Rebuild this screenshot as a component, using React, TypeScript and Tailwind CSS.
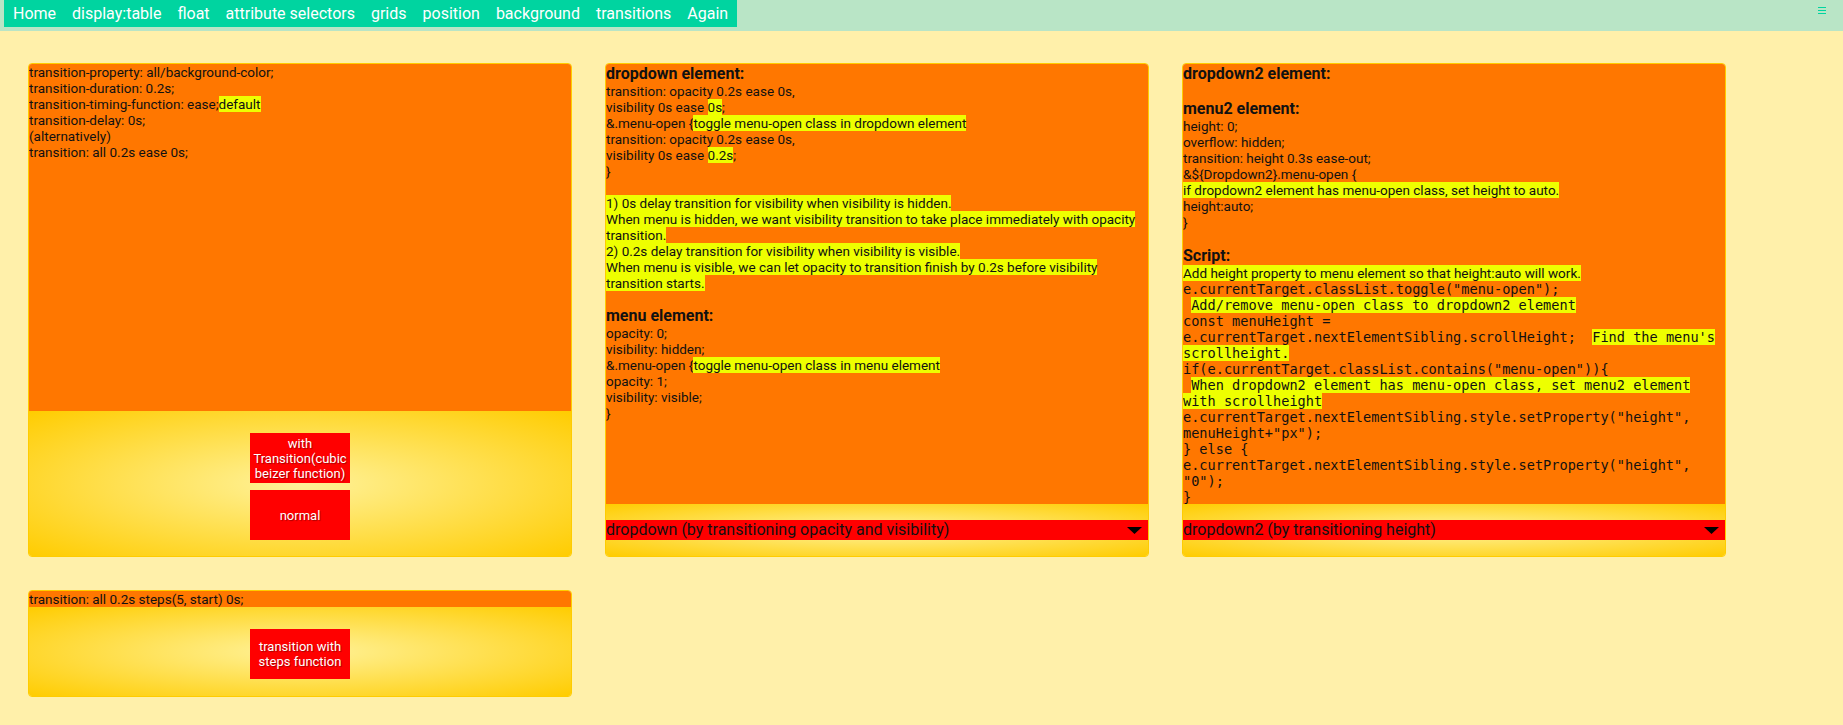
import React from "react";

const navItems = [
  "Home",
  "display:table",
  "float",
  "attribute selectors",
  "grids",
  "position",
  "background",
  "transitions",
  "Again",
];

const Hl = ({ children }: { children: React.ReactNode }) => (
  <span className="bg-[#eeff00]">{children}</span>
);

const Line = ({ children }: { children?: React.ReactNode }) => (
  <div className="h-4 whitespace-pre">{children}</div>
);

const Heading = ({ children, className = "" }: { children: React.ReactNode; className?: string }) => (
  <div className={`h-[19px] text-[16px] font-bold leading-[19px] ${className}`}>{children}</div>
);

const Mono = ({ children }: { children?: React.ReactNode }) => (
  <div className="h-4 whitespace-pre font-['DejaVu_Sans_Mono',monospace] text-[13.6px] leading-4">{children}</div>
);

const RedButton = ({ children }: { children: React.ReactNode }) => (
  <div className="flex h-[50px] w-[100px] items-center justify-center bg-[#ff0000] text-center text-[13px] leading-[15px] text-white [text-shadow:1px_1px_1px_rgba(0,0,0,0.35)]">
    {children}
  </div>
);

const Dropdown = ({ label }: { label: string }) => (
  <div className="flex h-[52px] flex-col justify-center bg-[radial-gradient(ellipse_at_center,#fff29a_0%,#ffcc00_100%)]">
    <div className="flex h-5 items-center justify-between bg-[#ff0000] pr-[6px] text-[16px] leading-5 text-[#111]">
      <span>{label}</span>
      <svg width="15" height="7" viewBox="0 0 15 7">
        <polygon points="0,0 15,0 7.5,7" fill="#000" />
      </svg>
    </div>
  </div>
);

const Card = ({ children, className = "" }: { children: React.ReactNode; className?: string }) => (
  <div className={`flex flex-col overflow-hidden rounded-[4px] border border-[#ffcc00] ${className}`}>
    {children}
  </div>
);

export default function App() {
  return (
    <div className="min-h-screen bg-[#fff0aa] font-['Roboto',sans-serif] text-[13.5px] leading-4 text-[#111]">
      {/* header */}
      <div className="flex h-[31px] items-start justify-between bg-[#b9e5c6]">
        <nav className="ml-1 flex h-[27px] items-center bg-[#00d4a0] px-px">
          {navItems.map((item) => (
            <span key={item} className="px-2 text-[16px] leading-5 whitespace-nowrap text-white">
              {item}
            </span>
          ))}
        </nav>
        <div className="mr-[17px] mt-[7px] flex w-2 flex-col gap-[2px]">
          <div className="h-px bg-[#00d4a0]" />
          <div className="h-px bg-[#00d4a0]" />
          <div className="h-px bg-[#00d4a0]" />
        </div>
      </div>

      <div className="grid grid-cols-[repeat(3,544px)] gap-[33px] pl-[28px] pt-[32px]">
        {/* card 1 */}
        <Card className="h-[494px]">
          <div className="h-[347px] bg-[#ff7700]">
            <Line>transition-property: all/background-color;</Line>
            <Line>transition-duration: 0.2s;</Line>
            <Line>
              transition-timing-function: ease;<Hl>default</Hl>
            </Line>
            <Line>transition-delay: 0s;</Line>
            <Line>(alternatively)</Line>
            <Line>transition: all 0.2s ease 0s;</Line>
          </div>
          <div className="flex flex-1 flex-col items-center gap-[7px] bg-[radial-gradient(ellipse_at_center,#fff29a_0%,#ffcc00_100%)] pt-[22px]">
            <RedButton>
              with
              <br />
              Transition(cubic
              <br />
              beizer function)
            </RedButton>
            <RedButton>normal</RedButton>
          </div>
        </Card>

        {/* card 2 */}
        <Card className="h-[494px]">
          <div className="h-[440px] bg-[#ff7700]">
            <Heading>dropdown element:</Heading>
            <Line>transition: opacity 0.2s ease 0s,</Line>
            <Line>
              visibility 0s ease <Hl>0s</Hl>;
            </Line>
            <Line>
              &amp;.menu-open {"{"}
              <Hl>toggle menu-open class in dropdown element</Hl>
            </Line>
            <Line>transition: opacity 0.2s ease 0s,</Line>
            <Line>
              visibility 0s ease <Hl>0.2s</Hl>;
            </Line>
            <Line>{"}"}</Line>
            <Line />
            <Line>
              <Hl>1) 0s delay transition for visibility when visibility is hidden.</Hl>
            </Line>
            <Line>
              <Hl>When menu is hidden, we want visibility transition to take place immediately with opacity</Hl>
            </Line>
            <Line>
              <Hl>transition.</Hl>
            </Line>
            <Line>
              <Hl>2) 0.2s delay transition for visibility when visibility is visible.</Hl>
            </Line>
            <Line>
              <Hl>When menu is visible, we can let opacity to transition finish by 0.2s before visibility</Hl>
            </Line>
            <Line>
              <Hl>transition starts.</Hl>
            </Line>
            <Heading className="mt-[15px]">menu element:</Heading>
            <Line>opacity: 0;</Line>
            <Line>visibility: hidden;</Line>
            <Line>
              &amp;.menu-open {"{"}
              <Hl>toggle menu-open class in menu element</Hl>
            </Line>
            <Line>opacity: 1;</Line>
            <Line>visibility: visible;</Line>
            <Line>{"}"}</Line>
          </div>
          <Dropdown label="dropdown (by transitioning opacity and visibility)" />
        </Card>

        {/* card 3 */}
        <Card className="h-[494px]">
          <div className="h-[440px] bg-[#ff7700]">
            <Heading>dropdown2 element:</Heading>
            <Line />
            <Heading>menu2 element:</Heading>
            <Line>height: 0;</Line>
            <Line>overflow: hidden;</Line>
            <Line>transition: height 0.3s ease-out;</Line>
            <Line>&amp;${"{Dropdown2}"}.menu-open {"{"}</Line>
            <Line>
              <Hl>if dropdown2 element has menu-open class, set height to auto.</Hl>
            </Line>
            <Line>height:auto;</Line>
            <Line>{"}"}</Line>
            <Line />
            <Heading>Script:</Heading>
            <Line>
              <Hl>Add height property to menu element so that height:auto will work.</Hl>
            </Line>
            <Mono>e.currentTarget.classList.toggle("menu-open");</Mono>
            <Mono>
              {" "}
              <Hl>Add/remove menu-open class to dropdown2 element</Hl>
            </Mono>
            <Mono>const menuHeight =</Mono>
            <Mono>
              {"e.currentTarget.nextElementSibling.scrollHeight;  "}
              <Hl>Find the menu's</Hl>
            </Mono>
            <Mono>
              <Hl>scrollheight.</Hl>
            </Mono>
            <Mono>if(e.currentTarget.classList.contains("menu-open")){"{"}</Mono>
            <Mono>
              {" "}
              <Hl>When dropdown2 element has menu-open class, set menu2 element</Hl>
            </Mono>
            <Mono>
              <Hl>with scrollheight</Hl>
            </Mono>
            <Mono>e.currentTarget.nextElementSibling.style.setProperty("height",</Mono>
            <Mono>menuHeight+"px");</Mono>
            <Mono>{"} else {"}</Mono>
            <Mono>e.currentTarget.nextElementSibling.style.setProperty("height",</Mono>
            <Mono>"0");</Mono>
            <Mono>{"}"}</Mono>
          </div>
          <Dropdown label="dropdown2 (by transitioning height)" />
        </Card>

        {/* card 4 */}
        <Card className="h-[107px]">
          <div className="h-4 bg-[#ff7700]">
            <Line>transition: all 0.2s steps(5, start) 0s;</Line>
          </div>
          <div className="flex flex-1 flex-col items-center bg-[radial-gradient(ellipse_at_center,#fff29a_0%,#ffcc00_100%)] pt-[22px]">
            <RedButton>
              transition with
              <br />
              steps function
            </RedButton>
          </div>
        </Card>
      </div>
    </div>
  );
}
